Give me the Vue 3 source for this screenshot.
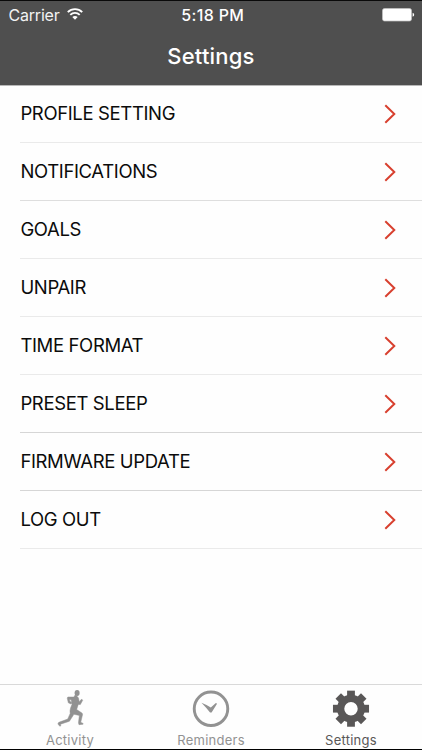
<script setup>
const rows = [
  { label: 'PROFILE SETTING', tone: 'faint' },
  { label: 'NOTIFICATIONS', tone: 'mid' },
  { label: 'GOALS', tone: 'faint' },
  { label: 'UNPAIR', tone: 'faint' },
  { label: 'TIME FORMAT', tone: 'faint' },
  { label: 'PRESET SLEEP', tone: 'strong' },
  { label: 'FIRMWARE UPDATE', tone: 'strong' },
  { label: 'LOG OUT', tone: 'faint' },
]
const teeth = [0, 45, 90, 135, 180, 225, 270, 315]
</script>

<template>
  <div class="screen">
    <header class="header">
      <div class="status">
        <div class="carrier">
          <span>Carrier</span>
          <svg class="wifi" width="16" height="12" viewBox="0 0 16 12" fill="none" stroke="#fff" stroke-width="1.9">
            <path d="M.8 4.1C4.8.1 11.2.1 15.2 4.1" />
            <path d="M3.3 6.8C5.9 4.2 10.1 4.2 12.7 6.8" />
            <path d="M8 11.8L5.3 9.1C6.8 7.7 9.2 7.7 10.7 9.1Z" fill="#fff" stroke="none" />
          </svg>
        </div>
        <div class="time">5:18 PM</div>
        <div class="battery">
          <svg width="33" height="14" viewBox="0 0 33 14">
            <rect x=".5" y=".5" width="29" height="12.5" rx="2" fill="#fff" stroke="#c4c4c4" stroke-width=".7" />
            <path d="M30.6 4.8Q32.2 5.3 32.2 6.8T30.6 8.8Z" fill="#fff" />
          </svg>
        </div>
      </div>
      <h1 class="title">Settings</h1>
    </header>

    <main class="list">
      <div v-for="row in rows" :key="row.label" class="row" :class="row.tone">
        <span class="label">{{ row.label }}</span>
        <svg width="12" height="20" viewBox="0 0 12 20" fill="none" stroke="#d8402f" stroke-width="2">
          <path d="M1.3 1.2L10.3 10L1.3 18.8" />
        </svg>
      </div>
    </main>

    <nav class="tabs">
      <div class="tab">
        <svg width="40" height="40" viewBox="0 0 40 40" fill="#929292">
          <ellipse cx="27.3" cy="4.1" rx="2.6" ry="3.1" />
          <path d="M25.2 6.2L24 8.3L18.3 8.2Q17.2 8.3 17.2 9.5L18.3 14.2L21 15.4L21.7 14.2L19.8 12.4L19.5 10.7L21.2 11L22 15.8L20.6 19.5Q19.6 22.5 20.2 25L17.7 30.8L8.6 34.2Q7.3 35 7.8 36.1L9.6 38.3L10.6 37.6L10.3 36.1L19.4 33.1L24 25.9L29.6 27.1L28.7 34.7L29.2 36.6L33.4 36.1L33.4 35.3L31 34.2L32.9 26.2Q33 25 31.9 24.4L26.8 21L28.5 15.8L30.6 16L33 11.6L32.2 10.5L31 11.2L29.5 13.4L28.7 9.3L27.3 7.5Z" stroke="#929292" stroke-width=".5" stroke-linejoin="round" />
        </svg>
        <span>Activity</span>
      </div>
      <div class="tab middle">
        <svg width="40" height="40" viewBox="0 0 40 40">
          <circle cx="20" cy="20.3" r="17.2" fill="none" stroke="#929292" stroke-width="3" />
          <path d="M10.2 14.1Q15.5 16.2 19.8 18.9L25 14.3L26.2 15.2L20.6 24.1H19Q15 19 10.2 14.1Z" fill="#929292" />
        </svg>
        <span>Reminders</span>
      </div>
      <div class="tab active">
        <svg width="40" height="40" viewBox="0 0 40 40">
          <g fill="#595757">
            <path v-for="angle in teeth" :key="angle" d="M16 10L16 1.7H24L24 10Z" :transform="`rotate(${angle} 20 20.2)`" />
          </g>
          <circle cx="20" cy="20.2" r="10.6" fill="none" stroke="#595757" stroke-width="7.4" />
        </svg>
        <span>Settings</span>
      </div>
    </nav>
  </div>
</template>

<style>
body {
  margin: 0;
}
</style>

<style scoped>
.screen {
  box-sizing: border-box;
  width: 422px;
  height: 750px;
  display: flex;
  flex-direction: column;
  overflow: hidden;
  background: #fefefe;
  border-top: 1px solid #090909;
  border-bottom: 1px solid #000;
  font-family: Inter, 'Liberation Sans', sans-serif;
}
.header {
  box-sizing: border-box;
  height: 85px;
  flex: none;
  background: #4f4f4f;
  border-bottom: 1px solid #b8b8b8;
  color: #fff;
}
.status {
  display: grid;
  grid-template-columns: 1fr auto 1fr;
  height: 28px;
  align-items: center;
  padding: 0 7px 0 8.5px;
}
.carrier {
  display: flex;
  align-items: center;
  gap: 7px;
  font-size: 16px;
  letter-spacing: -0.2px;
  color: #f3f3f3;
}
.wifi {
  margin-top: -2px;
}
.time {
  font-size: 16px;
  font-weight: 500;
  letter-spacing: 0.35px;
  padding-left: 2px;
}
.battery {
  display: flex;
  justify-content: flex-end;
}
.title {
  margin: 0;
  height: 55px;
  line-height: 55px;
  text-align: center;
  font-size: 22px;
  font-weight: 500;
  letter-spacing: 0.2px;
}
.list {
  flex: 1;
  margin-top: -1px;
}
.row {
  box-sizing: border-box;
  height: 58px;
  margin-left: 20px;
  padding-right: 26px;
  display: flex;
  align-items: center;
  justify-content: space-between;
  border-bottom: 1px solid #eaeaea;
}
.row.mid {
  border-color: #dedede;
}
.row.strong {
  border-color: #d6d6d6;
}
.label {
  padding: 0 0 2px 0.4px;
  font-size: 18.5px;
  letter-spacing: -0.36px;
  color: #0b0b0b;
}
.tabs {
  height: 64px;
  flex: none;
  display: flex;
  justify-content: space-between;
  border-top: 1px solid #d9d9d9;
}
.tab {
  width: 140px;
  display: flex;
  flex-direction: column;
  align-items: center;
  padding-top: 4px;
  font-size: 13px;
  line-height: 18px;
  letter-spacing: 0.25px;
  color: #929292;
}
.tab span {
  margin-top: 3px;
}
.tab.middle {
  width: 142px;
}
.tab.active {
  width: 140px;
  padding-right: 2px;
  box-sizing: border-box;
  color: #595757;
}
</style>
